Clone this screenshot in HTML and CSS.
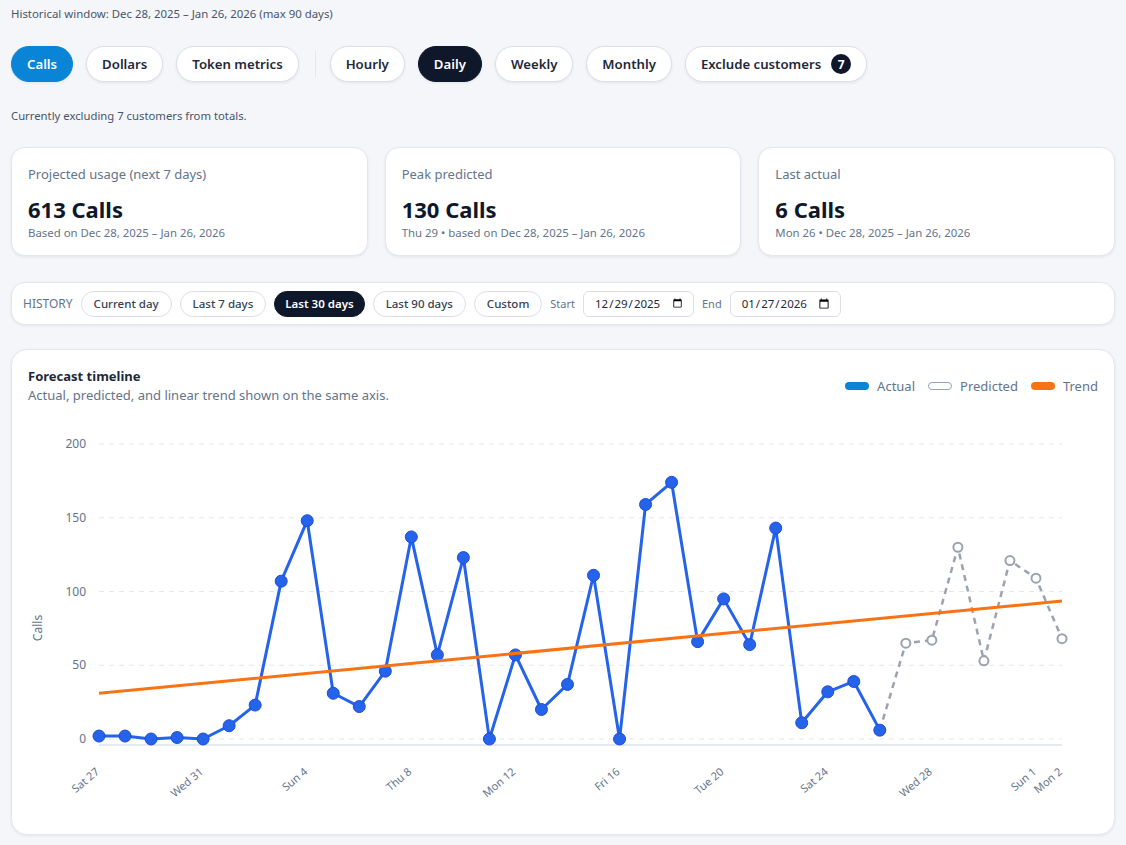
FILE: index.html
```html
<!DOCTYPE html>
<html lang="en">
<head>
<meta charset="UTF-8" />
<meta name="viewport" content="width=device-width, initial-scale=1.0" />
<title>Usage Forecast</title>
<link rel="stylesheet" href="styles.css">
</head>
<body>

<p class="window-note">Historical window: Dec 28, 2025 – Jan 26, 2026 (max 90 days)</p>

<div class="toolbar">
  <button class="pill pill-blue">Calls</button>
  <button class="pill">Dollars</button>
  <button class="pill">Token metrics</button>
  <span class="divider"></span>
  <button class="pill">Hourly</button>
  <button class="pill pill-dark">Daily</button>
  <button class="pill">Weekly</button>
  <button class="pill">Monthly</button>
  <button class="pill">Exclude customers <span class="badge">7</span></button>
</div>

<p class="exclude-note">Currently excluding 7 customers from totals.</p>

<div class="stats">
  <div class="stat-card">
    <div class="stat-label">Projected usage (next 7 days)</div>
    <div class="stat-value">613 Calls</div>
    <div class="stat-sub">Based on Dec 28, 2025 – Jan 26, 2026</div>
  </div>
  <div class="stat-card">
    <div class="stat-label">Peak predicted</div>
    <div class="stat-value">130 Calls</div>
    <div class="stat-sub">Thu 29 • based on Dec 28, 2025 – Jan 26, 2026</div>
  </div>
  <div class="stat-card">
    <div class="stat-label">Last actual</div>
    <div class="stat-value">6 Calls</div>
    <div class="stat-sub">Mon 26 • Dec 28, 2025 – Jan 26, 2026</div>
  </div>
</div>

<div class="history-bar">
  <span class="history-label">HISTORY</span>
  <button class="chip">Current day</button>
  <button class="chip">Last 7 days</button>
  <button class="chip chip-dark">Last 30 days</button>
  <button class="chip">Last 90 days</button>
  <button class="chip">Custom</button>
  <label class="date-label">Start</label>
  <input class="date-input" type="date" value="2025-12-29">
  <label class="date-label">End</label>
  <input class="date-input" type="date" value="2026-01-27">
</div>

<div class="chart-card">
  <div class="chart-head">
    <div>
      <h2>Forecast timeline</h2>
      <p>Actual, predicted, and linear trend shown on the same axis.</p>
    </div>
    <div class="legend">
      <span class="legend-item"><span class="swatch swatch-actual"></span>Actual</span>
      <span class="legend-item"><span class="swatch swatch-predicted"></span>Predicted</span>
      <span class="legend-item"><span class="swatch swatch-trend"></span>Trend</span>
    </div>
  </div>
  <svg id="chart" class="chart" width="1070" height="398"></svg>
</div>

<script>
  const actual = [2, 2, 0, 1, 0, 9, 23, 107, 148, 31, 22, 46, 137, 57, 123, 0, 57, 20, 37, 111, 0, 159, 174, 66, 95, 64, 143, 11, 32, 39, 6];
  const predicted = [65, 67, 130, 53, 121, 109, 68];
  const ticks = { 0: 'Sat 27', 4: 'Wed 31', 8: 'Sun 4', 12: 'Thu 8', 16: 'Mon 12', 20: 'Fri 16', 24: 'Tue 20', 28: 'Sat 24', 32: 'Wed 28', 36: 'Sun 1', 37: 'Mon 2' };

  const left = 71, right = 1034, zeroY = 319, topY = 24;
  const step = (right - left) / 37;
  const x = i => left + i * step;
  const y = v => zeroY - v * (zeroY - topY) / 200;

  function renderChart() {
    let svg = '';

    // grid + y labels
    [0, 50, 100, 150, 200].forEach(v => {
      svg += `<line class="grid" x1="${left}" x2="${right}" y1="${y(v)}" y2="${y(v)}"/>`;
      svg += `<text class="y-tick" x="58" y="${y(v)}" dy="0.35em">${v}</text>`;
    });
    svg += `<text class="axis-title" transform="translate(14,208) rotate(-90)">Calls</text>`;
    svg += `<line class="axis" x1="${left}" x2="${right}" y1="325" y2="325"/>`;

    // x labels
    for (const i in ticks) {
      svg += `<text class="x-tick" transform="translate(${x(i) + 1},353) rotate(-40)">${ticks[i]}</text>`;
    }

    // actual
    const actualPts = actual.map((v, i) => `${x(i)},${y(v)}`).join(' ');
    svg += `<polyline class="line-actual" points="${actualPts}"/>`;

    // predicted, starting from the last actual point
    const last = actual.length - 1;
    let predPts = `${x(last)},${y(actual[last])} `;
    predPts += predicted.map((v, i) => `${x(last + 1 + i)},${y(v)}`).join(' ');
    svg += `<polyline class="line-predicted" points="${predPts}"/>`;

    actual.forEach((v, i) => {
      svg += `<circle class="dot-actual" cx="${x(i)}" cy="${y(v)}" r="6"/>`;
    });
    predicted.forEach((v, i) => {
      svg += `<circle class="dot-predicted" cx="${x(last + 1 + i)}" cy="${y(v)}" r="4.5"/>`;
    });

    // trend
    svg += `<line class="line-trend" x1="${x(0)}" y1="${y(31)}" x2="${x(37)}" y2="${y(93.5)}"/>`;

    document.getElementById('chart').innerHTML = svg;
  }

  renderChart();
</script>

</body>
</html>
```

FILE: styles.css
```css
body {
  margin: 0;
  padding: 6px 11px;
  font-family: "Noto Sans", sans-serif;
  background-color: #f5f6fa;
  color: #0f172a;
}
p {
  margin: 0;
}
.window-note {
  font-size: 11.4px;
  line-height: 16px;
  color: #475569;
}
.toolbar {
  display: flex;
  align-items: center;
  gap: 13px;
  margin-top: 24px;
}
.pill {
  height: 36px;
  padding: 0 15px;
  border: 1px solid #dbe0e8;
  border-radius: 18px;
  background-color: #fff;
  color: #1e293b;
  font-family: inherit;
  font-size: 13.2px;
  font-weight: 600;
  display: flex;
  align-items: center;
  box-shadow: 0 1px 3px rgba(15, 23, 42, 0.08);
  cursor: pointer;
}
.pill-blue {
  background-color: #0a84d6;
  border-color: #0a84d6;
  color: #fff;
}
.pill-dark {
  background-color: #0f172a;
  border-color: #0f172a;
  color: #fff;
}
.divider {
  width: 1px;
  height: 26px;
  margin: 0 1px 0 3px;
  background-color: #e2e8f0;
}
.badge {
  width: 20px;
  height: 20px;
  margin-left: 10px;
  border-radius: 50%;
  background-color: #0f172a;
  color: #fff;
  font-size: 12px;
  font-weight: 700;
  display: flex;
  align-items: center;
  justify-content: center;
}
.exclude-note {
  margin-top: 26px;
  font-size: 11.3px;
  line-height: 16px;
  color: #475569;
}
.stats {
  display: grid;
  grid-template-columns: repeat(3, 1fr);
  gap: 17px;
  margin-top: 23px;
}
.stat-card {
  background-color: #fff;
  border: 1px solid #e2e8f0;
  border-radius: 14px;
  padding: 17px 16px 14px;
  box-shadow: 0 1px 3px rgba(15, 23, 42, 0.08);
}
.stat-label {
  font-size: 13px;
  line-height: 18px;
  color: #64748b;
}
.stat-value {
  margin-top: 12px;
  font-size: 22px;
  line-height: 28px;
  font-weight: 700;
}
.stat-sub {
  margin-top: 2px;
  font-size: 11.4px;
  line-height: 16px;
  color: #64748b;
}
.history-bar {
  display: flex;
  align-items: center;
  gap: 8px;
  height: 43px;
  box-sizing: border-box;
  margin-top: 26px;
  padding: 0 11px;
  background-color: #fff;
  border: 1px solid #e2e8f0;
  border-radius: 14px;
  box-shadow: 0 1px 3px rgba(15, 23, 42, 0.08);
}
.history-label {
  font-size: 12px;
  color: #64748b;
}
.chip {
  height: 26px;
  padding: 0 12px;
  border: 1px solid #dbe0e8;
  border-radius: 13px;
  background-color: #fff;
  color: #334155;
  font-family: inherit;
  font-size: 11.5px;
  font-weight: 500;
  cursor: pointer;
}
.chip-dark {
  padding: 0 10px;
  background-color: #0f172a;
  border-color: #0f172a;
  color: #fff;
  font-weight: 600;
}
.date-label {
  font-size: 11px;
  color: #64748b;
}
.date-input {
  width: 111px;
  height: 26px;
  box-sizing: border-box;
  padding: 0 8px 0 10px;
  border: 1px solid #dbe0e8;
  border-radius: 6px;
  font-family: inherit;
  font-size: 11.5px;
  color: #1e293b;
}
.chart-card {
  margin-top: 24px;
  background-color: #fff;
  border: 1px solid #e2e8f0;
  border-radius: 16px;
  padding: 17px 16px 16px;
  box-shadow: 0 1px 3px rgba(15, 23, 42, 0.08);
}
.chart-head {
  display: flex;
  justify-content: space-between;
  align-items: flex-start;
}
.chart-head h2 {
  margin: 0;
  font-size: 13px;
  line-height: 18px;
  font-weight: 700;
  color: #1e293b;
}
.chart-head p {
  font-size: 13px;
  line-height: 20px;
  color: #64748b;
}
.legend {
  display: flex;
  gap: 13px;
  margin-top: 10px;
  font-size: 13px;
  color: #64748b;
}
.legend-item {
  display: flex;
  align-items: center;
  gap: 8px;
}
.swatch {
  width: 24px;
  height: 8px;
  border-radius: 4px;
  box-sizing: border-box;
}
.swatch-actual {
  background-color: #0a84d6;
}
.swatch-predicted {
  background-color: #fff;
  border: 1px solid #94a3b8;
}
.swatch-trend {
  background-color: #f97316;
}
.chart {
  display: block;
  margin-top: 15px;
  font-family: "Noto Sans", sans-serif;
}
.grid {
  stroke: #e5e7eb;
  stroke-dasharray: 5 5;
}
.axis {
  stroke: #cbd5e1;
}
.y-tick {
  font-size: 12px;
  fill: #64748b;
  text-anchor: end;
}
.axis-title {
  font-size: 12px;
  fill: #64748b;
  text-anchor: middle;
}
.x-tick {
  font-size: 11px;
  fill: #64748b;
  text-anchor: end;
}
.line-actual {
  fill: none;
  stroke: #2563eb;
  stroke-width: 3;
  stroke-linejoin: round;
}
.line-predicted {
  fill: none;
  stroke: #9ca3af;
  stroke-width: 2.5;
  stroke-dasharray: 6 5;
}
.dot-actual {
  fill: #2563eb;
  stroke: #1d4ed8;
  stroke-width: 1;
}
.dot-predicted {
  fill: #fff;
  stroke: #9ca3af;
  stroke-width: 2;
}
.line-trend {
  stroke: #f97316;
  stroke-width: 3;
}
```
